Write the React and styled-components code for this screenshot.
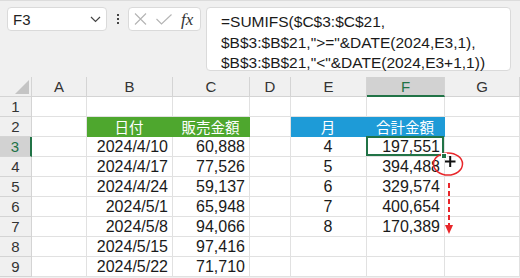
import React from "react";
import styled, { createGlobalStyle } from "styled-components";

const Global = createGlobalStyle`
  html, body { margin: 0; padding: 0; background: #f0f0f0; }
  body { font-family: "Liberation Sans", Arial, sans-serif; }
`;

const Root = styled.div`
  width: 520px;
  height: 278px;
  overflow: hidden;
  background: #f0f0f0;
  border-top: 1px solid #dcdcdc;
  box-sizing: border-box;
  display: flex;
  flex-direction: column;
`;

const TopBar = styled.div`
  height: 76px;
  box-sizing: border-box;
  padding: 6px 9px 0 7px;
  display: flex;
  align-items: flex-start;
`;

const NameBox = styled.div`
  width: 100px;
  height: 24px;
  box-sizing: border-box;
  background: #fff;
  border: 1px solid #dadada;
  border-radius: 4px;
  display: flex;
  align-items: center;
  justify-content: space-between;
  padding: 0 5px 0 5px;
  font-size: 15px;
  color: #222;
`;

const Dots = styled.div`
  width: 21px;
  height: 24px;
  display: flex;
  flex-direction: column;
  align-items: center;
  justify-content: center;
  gap: 2px;
  & > i {
    width: 2px;
    height: 2px;
    background: #444;
    display: block;
  }
`;

const FxButtons = styled.div`
  width: 73px;
  height: 24px;
  box-sizing: border-box;
  background: #fff;
  border: 1px solid #dadada;
  border-radius: 4px;
  display: flex;
  align-items: center;
  padding: 0 3px 0 4px;
  gap: 8px;
`;

const FxLabel = styled.span`
  font-family: "Liberation Serif", "Times New Roman", serif;
  font-style: italic;
  font-size: 17px;
  color: #333;
  margin-left: 1px;
  line-height: 1;
`;

const FormulaBox = styled.div`
  flex: 1;
  margin-left: 5px;
  height: 64px;
  box-sizing: border-box;
  background: #fff;
  border: 1px solid #dadada;
  border-radius: 4px;
  padding: 4px 0 0 14px;
  font-size: 15.5px;
  line-height: 20.5px;
  color: #1a1a1a;
  white-space: pre;
`;

const Sheet = styled.div`
  position: relative;
  display: grid;
  grid-template-columns: 32px 55px 86px 77px 41px 76px 78px 75px;
  grid-auto-rows: 20px;
  background: #fff;
`;

const HeadCell = styled.div`
  position: relative;
  box-sizing: border-box;
  background: ${(p) => (p.$active ? "#d2d2d2" : "#f0f0f0")};
  border-right: 1px solid #d4d4d4;
  border-bottom: ${(p) => (p.$active ? "2px solid #217346" : "1px solid #d4d4d4")};
  display: flex;
  align-items: center;
  justify-content: center;
  font-size: 15px;
  color: ${(p) => (p.$active ? "#217346" : "#333")};
`;

const Corner = styled(HeadCell)`
  justify-content: flex-end;
  align-items: flex-end;
  padding: 0 2px 2px 0;
`;

const RowHead = styled.div`
  box-sizing: border-box;
  background: ${(p) => (p.$active ? "#d2d2d2" : "#f0f0f0")};
  border-right: ${(p) => (p.$active ? "2px solid #217346" : "1px solid #d4d4d4")};
  border-bottom: 1px solid #d4d4d4;
  display: flex;
  align-items: center;
  justify-content: center;
  font-size: 15px;
  color: ${(p) => (p.$active ? "#217346" : "#333")};
`;

const Cell = styled.div`
  position: relative;
  box-sizing: border-box;
  border-right: 1px solid ${(p) => p.$fill || "#e1e1e1"};
  border-bottom: 1px solid ${(p) => p.$fill || "#e1e1e1"};
  background: ${(p) => p.$fill || "#fff"};
  display: flex;
  align-items: center;
  justify-content: ${(p) =>
    p.$align === "center" ? "center" : p.$align === "left" ? "flex-start" : "flex-end"};
  padding: 0 4px 0 3px;
  font-size: 16px;
  color: ${(p) => (p.$fill ? "#fff" : "#1a1a1a")};
  font-family: ${(p) =>
    p.$jp
      ? '"Noto Sans CJK JP", "Liberation Sans", sans-serif'
      : '"Liberation Sans", Arial, sans-serif'};
  ${(p) => (p.$jp ? "font-size: 14.5px;" : "")}
  white-space: nowrap;
  ${(p) =>
    p.$selected
      ? `
    &::after {
      content: "";
      position: absolute;
      left: -1px; top: -1px; right: 0; bottom: 0;
      border: 2px solid #217346;
      pointer-events: none;
    }
  `
      : ""}
`;

const Handle = styled.span`
  position: absolute;
  right: -3px;
  bottom: -3px;
  width: 4px;
  height: 4px;
  background: #217346;
  border: 1px solid #fff;
  z-index: 2;
`;

const Annotations = styled.svg`
  position: absolute;
  left: 0;
  top: 0;
  width: 520px;
  height: 201px;
  pointer-events: none;
  overflow: visible;
`;

const cols = ["A", "B", "C", "D", "E", "F", "G"];

const GREEN = "#4ea72e";
const BLUE = "#1e9bd7";

const dates = ["2024/4/10", "2024/4/17", "2024/4/24", "2024/5/1", "2024/5/8", "2024/5/15", "2024/5/22"];
const sales = ["60,888", "77,526", "59,137", "65,948", "94,066", "97,416", "71,710"];
const months = ["4", "5", "6", "7", "8"];
const totals = ["197,551", "394,488", "329,574", "400,654", "170,389"];

function rowCells(r) {
  const cells = [];
  const key = (c) => `${r}-${c}`;
  if (r === 1) {
    cols.forEach((c) => cells.push(<Cell key={key(c)} />));
    return cells;
  }
  if (r === 2) {
    cells.push(<Cell key={key("A")} />);
    cells.push(<Cell key={key("B")} $fill={GREEN} $jp $align="center">日付</Cell>);
    cells.push(<Cell key={key("C")} $fill={GREEN} $jp $align="center">販売金額</Cell>);
    cells.push(<Cell key={key("D")} />);
    cells.push(<Cell key={key("E")} $fill={BLUE} $jp $align="center">月</Cell>);
    cells.push(<Cell key={key("F")} $fill={BLUE} $jp $align="center">合計金額</Cell>);
    cells.push(<Cell key={key("G")} />);
    return cells;
  }
  const i = r - 3;
  cells.push(<Cell key={key("A")} />);
  cells.push(<Cell key={key("B")}>{dates[i]}</Cell>);
  cells.push(<Cell key={key("C")}>{sales[i]}</Cell>);
  cells.push(<Cell key={key("D")} />);
  cells.push(
    <Cell key={key("E")} $align="center">
      {months[i] || ""}
    </Cell>
  );
  cells.push(
    <Cell key={key("F")} $selected={r === 3}>
      {totals[i] || ""}
      {r === 3 && <Handle />}
    </Cell>
  );
  cells.push(<Cell key={key("G")} />);
  return cells;
}

export default function App() {
  return (
    <>
      <Global />
      <Root>
        <TopBar>
          <NameBox>
            <span>F3</span>
            <svg width="11" height="7" viewBox="0 0 11 7">
              <path d="M1 1 L5.5 5.5 L10 1" fill="none" stroke="#444" strokeWidth="1.2" />
            </svg>
          </NameBox>
          <Dots>
            <i />
            <i />
            <i />
          </Dots>
          <FxButtons>
            <svg width="15" height="12" viewBox="0 0 15 12">
              <path d="M2 0.5 L13 11.5 M13 0.5 L2 11.5" stroke="#b4b4b4" strokeWidth="1.1" fill="none" />
            </svg>
            <svg width="16" height="11" viewBox="0 0 16 11">
              <path d="M0.5 5 L5.5 10 L15.5 0.5" stroke="#b4b4b4" strokeWidth="1.1" fill="none" />
            </svg>
            <FxLabel>fx</FxLabel>
          </FxButtons>
          <FormulaBox>
            {"=SUMIFS($C$3:$C$21,\n$B$3:$B$21,\">=\"&DATE(2024,E3,1),\n$B$3:$B$21,\"<\"&DATE(2024,E3+1,1))"}
          </FormulaBox>
        </TopBar>
        <Sheet>
          <Corner>
            <svg width="14" height="14" viewBox="0 0 14 14">
              <path d="M14 0 L14 14 L0 14 Z" fill="#c4c4c4" />
            </svg>
          </Corner>
          {cols.map((c) => (
            <HeadCell key={c} $active={c === "F"}>
              {c}
            </HeadCell>
          ))}
          {[1, 2, 3, 4, 5, 6, 7, 8, 9].map((r) => (
            <React.Fragment key={r}>
              <RowHead $active={r === 3}>{r}</RowHead>
              {rowCells(r)}
            </React.Fragment>
          ))}
          <Annotations viewBox="0 0 520 201">
            <ellipse cx="448" cy="87" rx="14.5" ry="11" fill="none" stroke="#e8262a" strokeWidth="1.5" />
            <path d="M445 84.5 H455.5 M450.2 79 V90" stroke="#111" strokeWidth="2" />
            <path d="M449 106 V148" stroke="#e8262a" strokeWidth="2" strokeDasharray="5 3" />
            <path d="M445 148 L453 148 L449 157 Z" fill="#e8262a" />
          </Annotations>
        </Sheet>
      </Root>
    </>
  );
}
